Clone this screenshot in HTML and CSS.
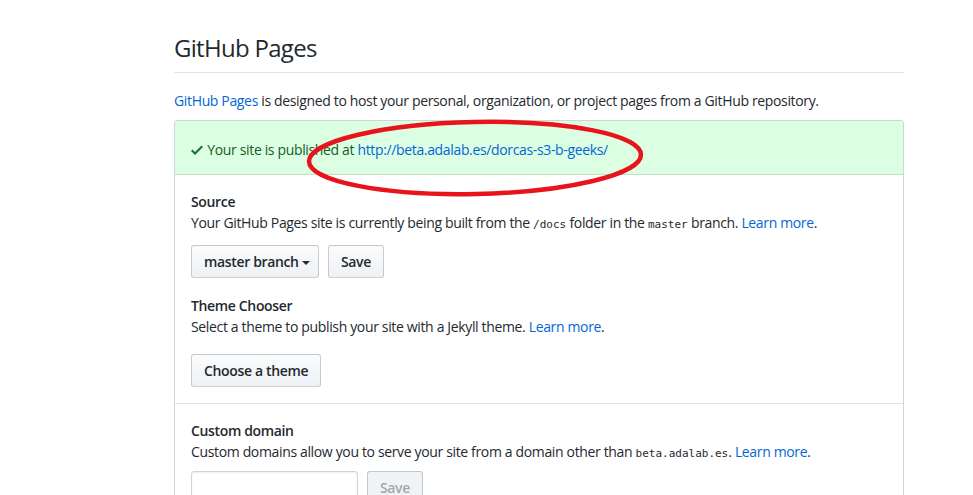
FILE: index.html
```html
<!DOCTYPE html>
<html lang="en">
<head>
<meta charset="utf-8">
<title>GitHub Pages</title>
<link rel="stylesheet" href="styles.css">
</head>
<body>
<div class="page">
  <h2 class="subhead">GitHub Pages</h2>
  <p class="intro"><a href="#">GitHub Pages</a> is designed to host your personal, organization, or project pages from a GitHub repository.</p>
  <div class="box">
    <div class="flash">
      <svg class="check" width="12" height="16" viewBox="0 0 12 16"><path fill="currentColor" fill-rule="evenodd" d="M12 5l-8 8-4-4 1.5-1.5L4 10l6.5-6.5L12 5z"/></svg>
      Your site is published at <a href="#">http://beta.adalab.es/dorcas-s3-b-geeks/</a>
    </div>
    <div class="section">
      <h4 class="label">Source</h4>
      <p class="note">Your GitHub Pages site is currently being built from the <code>/docs</code> folder in the <code>master</code> branch. <a href="#">Learn more</a>.</p>
      <div class="actions">
        <button class="btn btn-menu">master branch <span class="caret"></span></button>
        <button class="btn">Save</button>
      </div>
      <h4 class="label label-gap">Theme Chooser</h4>
      <p class="note">Select a theme to publish your site with a Jekyll theme. <a href="#">Learn more</a>.</p>
      <div class="actions actions-far">
        <button class="btn">Choose a theme</button>
      </div>
    </div>
    <div class="section">
      <h4 class="label">Custom domain</h4>
      <p class="note">Custom domains allow you to serve your site from a domain other than <code>beta.adalab.es</code>. <a href="#">Learn more</a>.</p>
      <div class="actions actions-tight">
        <input class="input" type="text">
        <button class="btn btn-disabled" disabled>Save</button>
      </div>
    </div>
  </div>
  <svg class="mark" width="380" height="100" viewBox="0 0 380 100">
    <ellipse cx="175" cy="43" rx="166" ry="36" transform="rotate(-1.2 175 43)" fill="none" stroke="#e8141c" stroke-width="4.5"/>
  </svg>
</div>
</body>
</html>
```

FILE: styles.css
```css
html, body {
  margin: 0;
  padding: 0;
  background: #fff;
}
body {
  font-family: "Open Sans", "Noto Sans", sans-serif;
  font-size: 14px;
  line-height: 21px;
  letter-spacing: -0.35px;
  color: #24292e;
  overflow: hidden;
}
a {
  color: #0366d6;
  text-decoration: none;
}
.page {
  position: relative;
  width: 730px;
  padding: 33px 0 0 174px;
}
.subhead {
  margin: 0;
  font-size: 24px;
  font-weight: 400;
  line-height: 30px;
  letter-spacing: -0.7px;
  padding-bottom: 9px;
  border-bottom: 1px solid #e1e4e8;
}
.intro {
  margin: 17px 0 9px;
}
.box {
  border: 1px solid #d1d5da;
  border-radius: 3px;
}
.flash {
  background: #dcffe4;
  color: #165c26;
  padding: 18px 16px 14px;
  border-bottom: 1px solid #c2e0c6;
}
.check {
  color: #1e6e31;
  vertical-align: -3px;
  margin-right: 1px;
}
.section {
  padding: 16px 16px 16px;
  border-bottom: 1px solid #e1e4e8;
}
.label {
  margin: 0;
  font-size: 14px;
  font-weight: 600;
  line-height: 21px;
}
.label-gap {
  margin-top: 17px;
}
.note {
  margin: 0;
}
code {
  font-family: "DejaVu Sans Mono", "Liberation Mono", monospace;
  font-size: 11px;
  letter-spacing: 0;
}
.actions {
  display: flex;
  gap: 9px;
  margin-top: 10px;
}
.actions-far {
  margin-top: 17px;
}
.actions-tight {
  margin-top: 7px;
}
.btn {
  font-family: inherit;
  font-size: 14px;
  font-weight: 600;
  line-height: 20px;
  letter-spacing: -0.35px;
  color: #24292e;
  padding: 5px 12px;
  height: 33px;
  border: 1px solid rgba(27, 31, 35, 0.2);
  border-radius: 3px;
  background: linear-gradient(#fafbfc, #eff3f6 90%);
}
.btn-menu {
  padding-right: 8px;
}
.btn-disabled {
  color: rgba(36, 41, 46, 0.4);
  background: #eff3f6;
}
.caret {
  display: inline-block;
  width: 0;
  height: 0;
  margin-left: 0;
  vertical-align: middle;
  border-top: 4px solid #24292e;
  border-left: 4px solid transparent;
  border-right: 4px solid transparent;
}
.input {
  width: 167px;
  height: 33px;
  box-sizing: border-box;
  border: 1px solid #d1d5da;
  border-radius: 3px;
  box-shadow: inset 0 1px 2px rgba(27, 31, 35, 0.075);
}
.mark {
  position: absolute;
  left: 300px;
  top: 115px;
}
```
